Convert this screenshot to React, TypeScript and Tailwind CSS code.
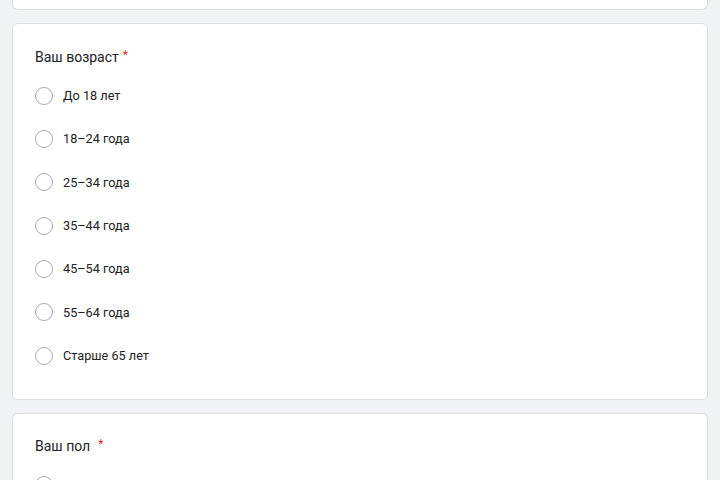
import React from "react";

const ages = ["До 18 лет", "18–24 года", "25–34 года", "35–44 года", "45–54 года", "55–64 года", "Старше 65 лет"];

function Radio({ label }: { label: string }) {
  return (
    <div className="flex h-[43.33px] items-center">
      <span className="ml-[22px] h-[18px] w-[18px] shrink-0 rounded-full border-[1.5px] border-[#a8abb0]" />
      <span className="ml-[10px] text-[12.7px] text-[#202124]">{label}</span>
    </div>
  );
}

export default function App() {
  return (
    <div
      className="flex h-[480px] w-[720px] flex-col gap-[13px] overflow-hidden bg-[#f1f2f5] px-[12px]"
      style={{ fontFamily: "Roboto, 'Noto Sans', sans-serif" }}
    >
      <div className="h-[10px] shrink-0 rounded-b-[6px] border-x border-b border-[#dcdde1] bg-white" />
      <div className="h-[377px] shrink-0 rounded-[6px] border border-[#dcdde1] bg-white pt-[23px]">
        <div className="ml-[22px] flex h-[20px] items-center text-[14px] text-[#202124]">
          Ваш возраст<span className="relative -top-[2px] ml-[4px] text-[12px] text-[#d93025]">*</span>
        </div>
        <div className="mt-[7px] flex flex-col">
          {ages.map((a) => (
            <Radio key={a} label={a} />
          ))}
        </div>
      </div>
      <div className="h-[200px] shrink-0 rounded-[6px] border border-[#dcdde1] bg-white pt-[22px]">
        <div className="ml-[22px] flex h-[20px] items-center text-[14px] text-[#202124]">
          Ваш пол<span className="relative -top-[2px] ml-[8px] text-[12px] text-[#d93025]">*</span>
        </div>
        <div className="mt-[7px] flex flex-col">
          <Radio label="Мужской" />
        </div>
      </div>
    </div>
  );
}
